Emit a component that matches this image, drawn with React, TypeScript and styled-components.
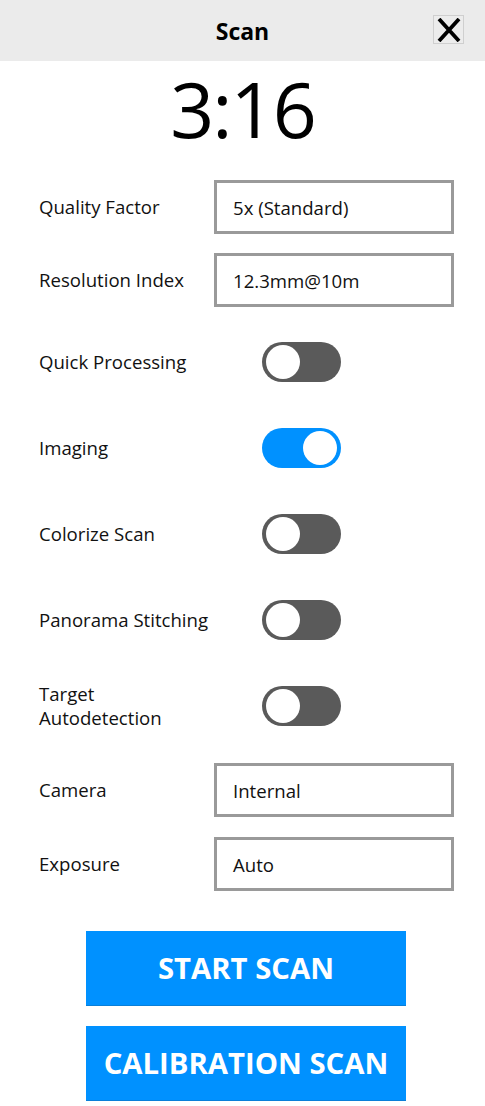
import React, { useState } from "react";
import styled, { createGlobalStyle } from "styled-components";

const Global = createGlobalStyle`
  html, body { margin: 0; padding: 0; background: #ffffff; }
  body { font-family: "Open Sans", "Noto Sans", sans-serif; color: #111; }
  * { box-sizing: border-box; }
`;

const Page = styled.div`
  width: 485px;
  min-height: 1106px;
  display: flex;
  flex-direction: column;
`;

const Header = styled.header`
  height: 61px;
  background: #ebebeb;
  display: flex;
  align-items: center;
  justify-content: center;
  position: relative;
`;

const Title = styled.h1`
  margin: 0;
  font-size: 23px;
  font-weight: 700;
  color: #000;
`;

const CloseButton = styled.button`
  position: absolute;
  right: 21px;
  top: 15px;
  width: 31px;
  height: 29px;
  padding: 0;
  border: 1px solid #cfcfcf;
  background: #ececec;
  display: flex;
  align-items: center;
  justify-content: center;
  cursor: pointer;
`;

const Timer = styled.div`
  height: 104px;
  display: flex;
  align-items: center;
  justify-content: center;
  font-size: 77px;
  font-weight: 400;
  color: #000;
  letter-spacing: -2px;
  padding-bottom: 10px;
`;

const Form = styled.div`
  display: flex;
  flex-direction: column;
  padding: 15px 0 0 39px;
`;

const Row = styled.div<{ $gap: number }>`
  display: grid;
  grid-template-columns: 175px 1fr;
  align-items: center;
  margin-top: ${(p) => p.$gap}px;
`;

const Label = styled.div`
  font-size: 18.6px;
  line-height: 24px;
  color: #111;
`;

const Field = styled.div`
  width: 240px;
  height: 54px;
  border: 3px solid #9a9a9a;
  display: flex;
  align-items: center;
  padding-left: 16px;
  font-size: 18.6px;
  color: #111;
`;

const Track = styled.button<{ $on: boolean }>`
  width: 79px;
  height: 40px;
  margin-left: 48px;
  border: none;
  padding: 0 4px;
  border-radius: 20px;
  background: ${(p) => (p.$on ? "#0091ff" : "#5a5a5a")};
  display: flex;
  align-items: center;
  justify-content: ${(p) => (p.$on ? "flex-end" : "flex-start")};
  cursor: pointer;
`;

const Knob = styled.span`
  width: 34px;
  height: 34px;
  border-radius: 50%;
  background: #ffffff;
`;

const Actions = styled.div`
  display: flex;
  flex-direction: column;
  align-items: center;
  gap: 20px;
  margin-top: 40px;
  padding-left: 7px;
`;

const ActionButton = styled.button`
  width: 320px;
  height: 75px;
  border: none;
  border-bottom: 1px solid #0a7fd8;
  background: #0091ff;
  color: #ffffff;
  font-family: "Open Sans", "Noto Sans", sans-serif;
  font-size: 29.3px;
  font-weight: 700;
  text-transform: uppercase;
  cursor: pointer;
`;

const CloseIcon = () => (
  <svg width="26" height="24" viewBox="0 0 26 24">
    <path d="M3 1 L23 23 M23 1 L3 23" stroke="#000" strokeWidth="3.8" fill="none" />
  </svg>
);

const Toggle = ({ initial }: { initial: boolean }) => {
  const [on, setOn] = useState(initial);
  return (
    <Track $on={on} onClick={() => setOn(!on)}>
      <Knob />
    </Track>
  );
};

export default function App() {
  return (
    <Page>
      <Global />
      <Header>
        <Title>Scan</Title>
        <CloseButton aria-label="Close">
          <CloseIcon />
        </CloseButton>
      </Header>
      <Timer>3:16</Timer>
      <Form>
        <Row $gap={0}>
          <Label>Quality Factor</Label>
          <Field>5x (Standard)</Field>
        </Row>
        <Row $gap={19}>
          <Label>Resolution Index</Label>
          <Field>12.3mm@10m</Field>
        </Row>
        <Row $gap={35}>
          <Label>Quick Processing</Label>
          <Toggle initial={false} />
        </Row>
        <Row $gap={46}>
          <Label>Imaging</Label>
          <Toggle initial={true} />
        </Row>
        <Row $gap={46}>
          <Label>Colorize Scan</Label>
          <Toggle initial={false} />
        </Row>
        <Row $gap={46}>
          <Label>Panorama Stitching</Label>
          <Toggle initial={false} />
        </Row>
        <Row $gap={42}>
          <Label>
            Target
            <br />
            Autodetection
          </Label>
          <Toggle initial={false} />
        </Row>
        <Row $gap={33}>
          <Label>Camera</Label>
          <Field>Internal</Field>
        </Row>
        <Row $gap={20}>
          <Label>Exposure</Label>
          <Field>Auto</Field>
        </Row>
      </Form>
      <Actions>
        <ActionButton>Start Scan</ActionButton>
        <ActionButton>Calibration Scan</ActionButton>
      </Actions>
    </Page>
  );
}
